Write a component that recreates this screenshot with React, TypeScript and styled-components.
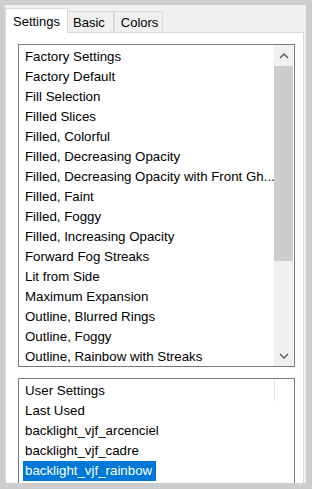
import React from 'react'
import styled, { createGlobalStyle } from 'styled-components'

const factoryItems = [
  'Factory Default',
  'Fill Selection',
  'Filled Slices',
  'Filled, Colorful',
  'Filled, Decreasing Opacity',
  'Filled, Decreasing Opacity with Front Gh...',
  'Filled, Faint',
  'Filled, Foggy',
  'Filled, Increasing Opacity',
  'Forward Fog Streaks',
  'Lit from Side',
  'Maximum Expansion',
  'Outline, Blurred Rings',
  'Outline, Foggy',
  'Outline, Rainbow with Streaks',
]

const userItems = ['Last Used', 'backlight_vjf_arcenciel', 'backlight_vjf_cadre', 'backlight_vjf_rainbow']

const Chevron = ({ down }: { down?: boolean }) => (
  <svg width="10" height="6" viewBox="0 0 10 6">
    <polyline
      points={down ? '1,1 5,5 9,1' : '1,5 5,1 9,5'}
      fill="none"
      stroke="#606060"
      strokeWidth="1.5"
    />
  </svg>
)

const App = () => {
  return (
    <>
      <GlobalStyle />
      <Frame>
        <Window>
          <TabRow>
            <Tab $active>Settings</Tab>
            <Tab $pl={5} $pr={8}>Basic</Tab>
            <Tab $pl={6} $pr={4} $leftBorder>Colors</Tab>
          </TabRow>
          <Panel>
            <ListBox $height={323}>
              <ListContent>
                <Header>Factory Settings</Header>
                {factoryItems.map((text, idx) => (
                  <Row key={idx}>
                    <Label>{text}</Label>
                  </Row>
                ))}
              </ListContent>
              <ScrollBar>
                <ArrowButton><Chevron /></ArrowButton>
                <Thumb />
                <Track />
                <ArrowButton><Chevron down /></ArrowButton>
              </ScrollBar>
            </ListBox>
            <ListBox $height={140} $gap={11}>
              <ListContent>
                <Header $divider>User Settings</Header>
                {userItems.map((text, idx) => (
                  <Row key={idx}>
                    <Label $selected={idx === userItems.length - 1}>{text}</Label>
                  </Row>
                ))}
              </ListContent>
            </ListBox>
          </Panel>
        </Window>
      </Frame>
    </>
  )
}

const GlobalStyle = createGlobalStyle`
  html, body {
    margin: 0;
    padding: 0;
    background: #cdcdcd;
    font-family: "Liberation Sans", Arial, sans-serif;
    font-size: 13px;
    color: #000;
  }
`

const Frame = styled.div`
  box-sizing: border-box;
  width: 312px;
  height: 489px;
  padding: 5px 6px 6px 5px;
  background: #cdcdcd;
`

const Window = styled.div`
  display: flex;
  flex-direction: column;
  height: 100%;
  padding-right: 2px;
  background: #f0f0f0;
  overflow: hidden;
`

const TabRow = styled.div`
  display: flex;
  align-items: flex-end;
  height: 27px;
  flex-shrink: 0;
  position: relative;
  z-index: 1;
`

const Tab = styled.div<{ $active?: boolean; $pl?: number; $pr?: number; $leftBorder?: boolean }>`
  box-sizing: border-box;
  height: ${p => (p.$active ? 25 : 21)}px;
  margin-bottom: ${p => (p.$active ? -1 : 0)}px;
  padding: ${p => (p.$active ? '5px 7px 0' : `3px ${p.$pr}px 0 ${p.$pl}px`)};
  line-height: 16px;
  background: ${p => (p.$active ? '#ffffff' : '#f0f0f0')};
  border: 1px solid #d9d9d9;
  border-bottom: none;
  border-left-width: ${p => (p.$active || p.$leftBorder ? 1 : 0)}px;
  white-space: nowrap;
`

const Panel = styled.div`
  flex: 1;
  min-height: 0;
  display: flex;
  flex-direction: column;
  padding: 11px 8px 0 12px;
  background: #ffffff;
  border: 1px solid #d9d9d9;
  border-bottom: none;
  overflow: hidden;
`

const ListBox = styled.div<{ $height: number; $gap?: number }>`
  box-sizing: border-box;
  display: flex;
  flex-shrink: 0;
  height: ${p => p.$height}px;
  margin-top: ${p => p.$gap || 0}px;
  border: 1px solid #7a7a7a;
  background: #ffffff;
  font-size: 13.3px;
`

const ListContent = styled.div`
  flex: 1;
  min-width: 0;
  overflow: hidden;
`

const Header = styled.div<{ $divider?: boolean }>`
  box-sizing: border-box;
  height: 22px;
  padding: 2px 0 0 6px;
  line-height: 20px;
  white-space: nowrap;
  ${p => (p.$divider ? 'margin-right: 19px; border-right: 1px solid #e5e5e5;' : '')}
`

const Row = styled.div`
  height: 20px;
  padding: 0 4px;
  white-space: nowrap;
  overflow: hidden;
`

const Label = styled.span<{ $selected?: boolean }>`
  display: inline-block;
  height: 20px;
  padding: 0 4px 0 2px;
  line-height: 20px;
  background: ${p => (p.$selected ? '#0078d7' : 'transparent')};
  color: ${p => (p.$selected ? '#ffffff' : '#000000')};
`

const ScrollBar = styled.div`
  display: flex;
  flex-direction: column;
  width: 19px;
  margin-right: 1px;
  background: #f0f0f0;
`

const ArrowButton = styled.div`
  display: flex;
  align-items: center;
  justify-content: center;
  height: 21px;
  flex-shrink: 0;
`

const Thumb = styled.div`
  height: 195px;
  flex-shrink: 0;
  background: #cdcdcd;
`

const Track = styled.div`
  flex: 1;
`

export default App
